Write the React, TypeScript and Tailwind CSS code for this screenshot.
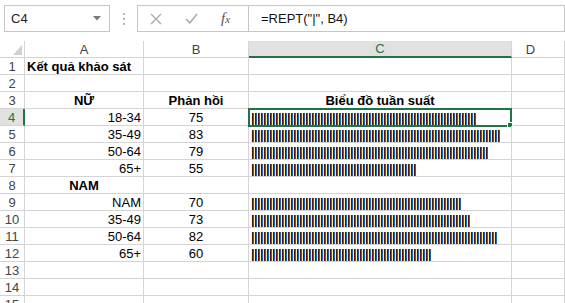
import React from 'react';

type Row = {
    a?: string;
    aAlign?: 'left' | 'center' | 'right';
    b?: string;
    c?: string;
    bar?: number;
    bold?: boolean;
};

// rows 1..15 of the sheet
const rows: Row[] = [
    { a: 'Kết quả khảo sát', aAlign: 'left', bold: true },
    {},
    { a: 'NỮ', aAlign: 'center', b: 'Phản hồi', c: 'Biểu đồ tuần suất', bold: true },
    { a: '18-34', b: '75', bar: 75 },
    { a: '35-49', b: '83', bar: 83 },
    { a: '50-64', b: '79', bar: 79 },
    { a: '65+', b: '55', bar: 55 },
    { a: 'NAM', aAlign: 'center', bold: true },
    { a: 'NAM', b: '70', bar: 70 },
    { a: '35-49', b: '73', bar: 73 },
    { a: '50-64', b: '82', bar: 82 },
    { a: '65+', b: '60', bar: 60 },
    {},
    {},
    {},
];

const cell = 'h-[17px] border-r border-b border-[#d4d4d4] leading-[17px] whitespace-nowrap';

function FormulaBar() {
    return (
        <div className="flex h-[41px] items-start pt-[5px] text-[13px]">
            {/* name box */}
            <div className="ml-[4px] flex h-[27px] w-[106px] items-center justify-between border border-[#c6c6c6] pl-[6px] pr-[8px] text-[#222]">
                <span>C4</span>
                <svg width="8" height="5" viewBox="0 0 8 5">
                    <path d="M0 0 L8 0 L4 4.5 Z" fill="#7a7a7a" />
                </svg>
            </div>
            {/* grip dots */}
            <div className="flex w-[27px] flex-col items-center gap-[3px] pt-[8px]">
                <span className="h-[2px] w-[2px] bg-[#b8b8b8]" />
                <span className="h-[2px] w-[2px] bg-[#b8b8b8]" />
                <span className="h-[2px] w-[2px] bg-[#b8b8b8]" />
            </div>
            {/* cancel / enter / fx */}
            <div className="flex h-[27px] w-[112px] items-center border border-[#c6c6c6]">
                <svg className="ml-[12px]" width="12" height="12" viewBox="0 0 12 12">
                    <path d="M1 1 L11 11 M11 1 L1 11" stroke="#a8a8a8" strokeWidth="1.3" />
                </svg>
                <svg className="ml-[23px]" width="13" height="11" viewBox="0 0 13 11">
                    <path d="M1 6 L4.8 10 L12 1" stroke="#a8a8a8" strokeWidth="1.5" fill="none" />
                </svg>
                <span className="ml-[23px] font-['Liberation_Serif',serif] text-[15px] italic leading-none text-[#555]">
                    f<span className="text-[11px]">x</span>
                </span>
            </div>
            {/* formula input */}
            <div className="flex h-[27px] flex-1 items-center border border-l-0 border-[#c6c6c6] pl-[12px] text-[#111]">
                =REPT(&quot;|&quot;, B4)
            </div>
        </div>
    );
}

function Bars({ n }: { n: number }) {
    return (
        <span className="tracking-[-0.3769px] text-black [text-shadow:0.35px_0_0_#000]">{'|'.repeat(n)}</span>
    );
}

export default function App() {
    return (
        <div className="h-[303px] w-[565px] overflow-hidden bg-white font-['Liberation_Sans',Arial,sans-serif] text-[13px]">
            <FormulaBar />

            <div className="grid grid-cols-[25px_119px_105px_263px_1fr]">
                {/* column headers */}
                <div className="relative h-[17px] border-r border-b border-[#d4d4d4]">
                    <svg className="absolute left-[13px] top-[4px]" width="9" height="10" viewBox="0 0 9 10">
                        <path d="M9 0 L9 10 L0 10 Z" fill="#d0d0d0" />
                    </svg>
                </div>
                <div className={`${cell} text-center text-[#444]`}>A</div>
                <div className={`${cell} text-center text-[#444]`}>B</div>
                <div className="h-[17px] border-r border-b-2 border-r-[#d4d4d4] border-b-[#217346] bg-[#e1e1e1] text-center leading-[16px] text-[#217346]">
                    C
                </div>
                <div className={`${cell} pr-[15px] text-center text-[#444]`}>D</div>

                {rows.map((r, i) => {
                    const sel = i === 3;
                    const aAlign =
                        r.aAlign === 'left' ? 'text-left pl-[2px]' : r.aAlign === 'center' ? 'text-center' : 'text-right pr-[2px]';
                    return (
                        <React.Fragment key={i}>
                            <div
                                className={
                                    sel
                                        ? 'h-[17px] border-b border-r-2 border-b-[#d4d4d4] border-r-[#217346] bg-[#e1e1e1] text-center leading-[17px] text-[#217346]'
                                        : `${cell} text-center text-[#444]`
                                }
                            >
                                {i + 1}
                            </div>
                            <div className={`${cell} ${aAlign} text-black ${r.bold ? 'font-bold' : ''}`}>
                                {r.a}
                            </div>
                            <div className={`${cell} text-center text-black ${r.bold ? 'font-bold' : ''}`}>{r.b}</div>
                            <div className={`${cell} relative text-black ${r.c ? 'text-center font-bold' : 'pl-[2px]'}`}>
                                {r.c}
                                {r.bar ? <Bars n={r.bar} /> : null}
                                {sel && (
                                    <div className="absolute -bottom-[2px] -left-[1px] -right-[1px] -top-[1px] border-2 border-[#217346]">
                                        <span className="absolute -bottom-[3px] -right-[3px] h-[6px] w-[6px] border border-white bg-[#217346]" />
                                    </div>
                                )}
                            </div>
                            <div className={cell} />
                        </React.Fragment>
                    );
                })}
            </div>
        </div>
    );
}
